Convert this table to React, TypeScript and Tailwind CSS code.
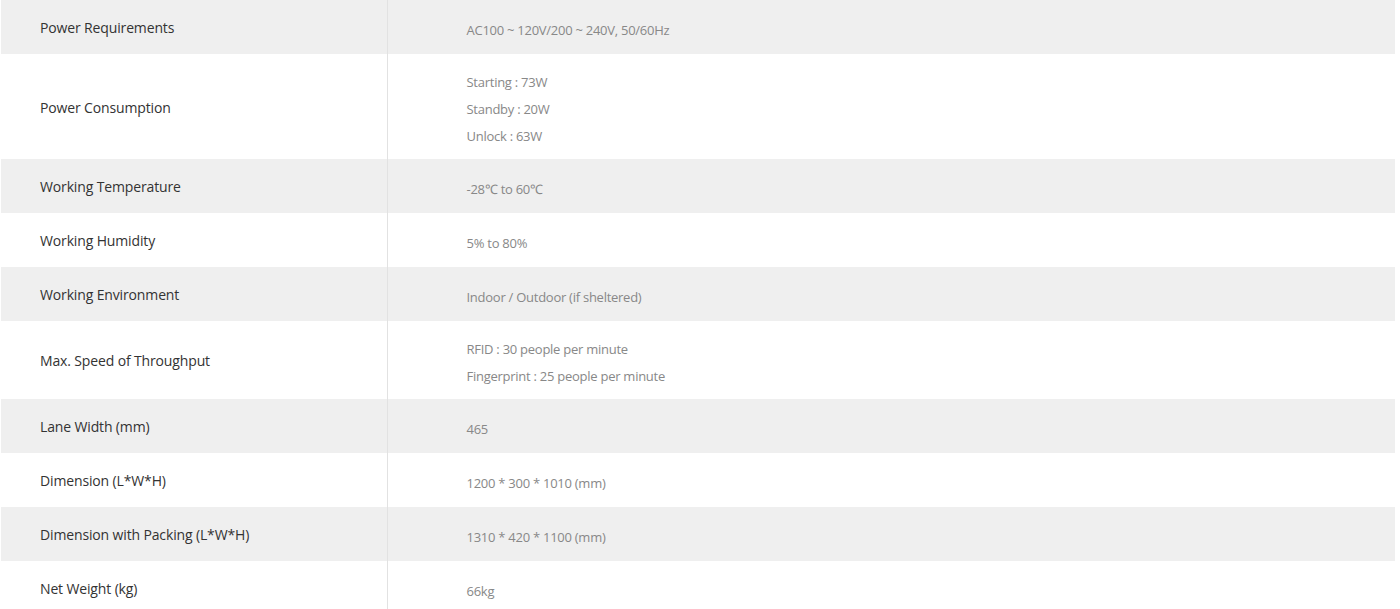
const SPECS: { label: string; values: string[] }[] = [
  { label: "Power Requirements", values: ["AC100 ~ 120V/200 ~ 240V, 50/60Hz"] },
  { label: "Power Consumption", values: ["Starting : 73W", "Standby : 20W", "Unlock : 63W"] },
  { label: "Working Temperature", values: ["-28℃ to 60℃"] },
  { label: "Working Humidity", values: ["5% to 80%"] },
  { label: "Working Environment", values: ["Indoor / Outdoor (if sheltered)"] },
  { label: "Max. Speed of Throughput", values: ["RFID : 30 people per minute", "Fingerprint : 25 people per minute"] },
  { label: "Lane Width (mm)", values: ["465"] },
  { label: "Dimension (L*W*H)", values: ["1200 * 300 * 1010 (mm)"] },
  { label: "Dimension with Packing (L*W*H)", values: ["1310 * 420 * 1100 (mm)"] },
  { label: "Net Weight (kg)", values: ["66kg"] },
];

export default function App() {
  return (
    <div className="min-h-screen bg-white font-['Open_Sans','Liberation_Sans',sans-serif]">
      <table className="ml-px w-[1394px] border-collapse">
        <tbody>
          {SPECS.map((row, i) => (
            <tr key={row.label} className={i % 2 === 0 ? "bg-[#efefef]" : "bg-white"}>
              <th className="w-[386px] border-r border-[#e2e2e2] pt-[13px] pb-[11px] pl-[39px] text-left align-middle text-[14px] font-normal leading-[30px] tracking-[-0.01em] text-[#333]">
                {row.label}
              </th>
              <td className="pt-[15px] pb-[9px] pl-[79px] align-middle text-[13px] leading-[27px] tracking-[-0.02em] text-[#888]">
                {row.values.map((v) => (
                  <div key={v}>{v}</div>
                ))}
              </td>
            </tr>
          ))}
        </tbody>
      </table>
    </div>
  );
}
